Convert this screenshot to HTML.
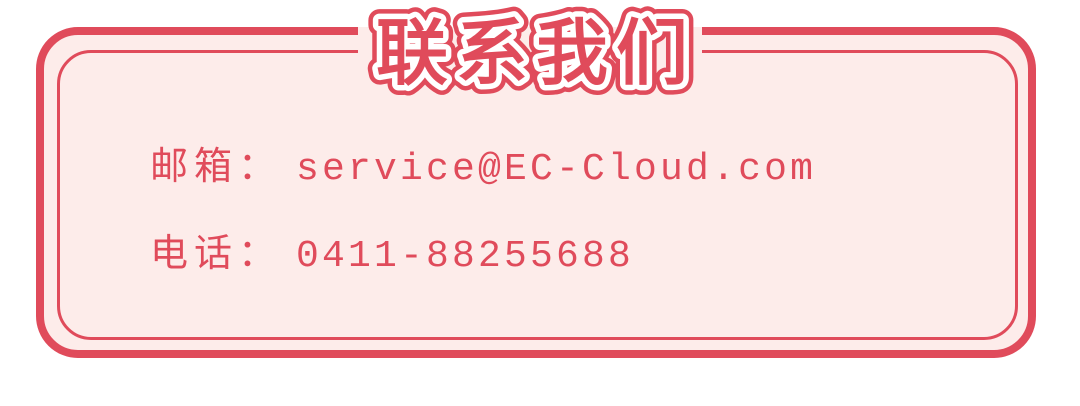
<!DOCTYPE html>
<html><head><meta charset="utf-8"><style>
html,body{margin:0;padding:0;background:#fff;width:1080px;height:406px;overflow:hidden;position:relative}
.outer{position:absolute;left:36px;top:27px;width:984px;height:315px;border:8px solid #e04b5b;border-radius:42px;background:#fdecea}
.inner{position:absolute;left:57px;top:50px;width:955px;height:284px;border:3px solid #e04b5b;border-radius:34px}
.gap{position:absolute;left:358px;top:27px;width:344px;height:30px;background:#fdecea}
.line{position:absolute;left:150px;color:#e04b5b;white-space:nowrap;font-size:38px;line-height:1}
.cjk{font-family:"WenQuanYi Zen Hei","Noto Sans CJK SC",sans-serif;display:inline-block;width:146px;letter-spacing:6px}
.lat{font-family:"Liberation Mono",monospace;letter-spacing:3.2px;font-size:38px}
svg{position:absolute;left:0;top:0}
</style></head><body>
<div class="outer"></div>
<div class="inner"></div>
<div class="gap"></div>
<svg width="1080" height="110">
<g font-family="WenQuanYi Zen Hei,Noto Sans CJK SC,sans-serif" font-size="72" text-anchor="middle" letter-spacing="8">
<text x="536" y="78" fill="#e04b5b" stroke="#e04b5b" stroke-width="22" stroke-linejoin="round">联系我们</text>
<text x="536" y="78" fill="#fff" stroke="#fff" stroke-width="13" stroke-linejoin="round">联系我们</text>
<text x="536" y="78" fill="#e04b5b" stroke="#e04b5b" stroke-width="2">联系我们</text>
</g>
</svg>
<div class="line" style="top:144px"><span class="cjk">邮箱：</span><span class="lat">service@EC-Cloud.com</span></div>
<div class="line" style="top:231px"><span class="cjk">电话：</span><span class="lat">0411-88255688</span></div>
</body></html>
